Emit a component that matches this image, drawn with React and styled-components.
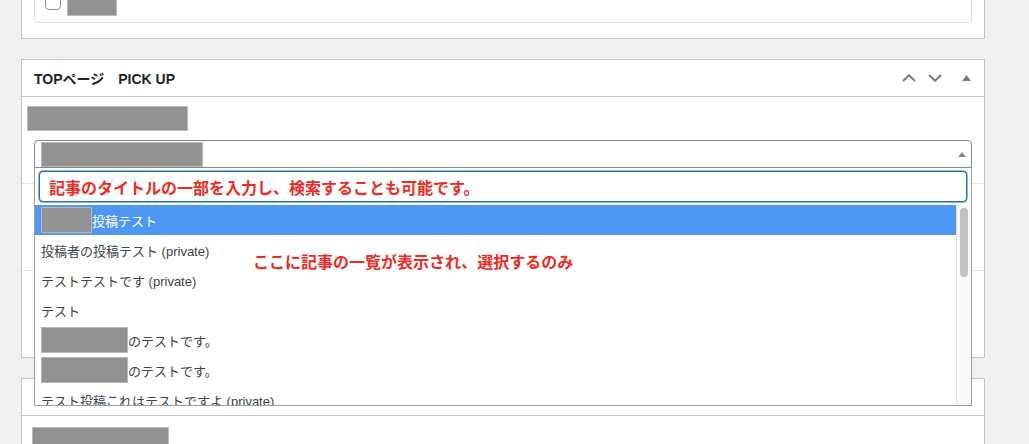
import React from 'react';
import styled, { createGlobalStyle } from 'styled-components';

const GlobalStyle = createGlobalStyle`
  * {
    box-sizing: border-box;
  }
  html,
  body {
    margin: 0;
    padding: 0;
    background: #f0f0f1;
    overflow: hidden;
  }
  body {
    font-family: "Liberation Sans", "Noto Sans CJK JP", sans-serif;
    font-size: 13px;
    color: #3c434a;
  }
`;

const Page = styled.div`
  padding-left: 21px;
  width: 985px;
`;

const Postbox = styled.section`
  position: relative;
  background: #fff;
  border: 1px solid #c3c4c7;
  margin-top: ${(p) => p.$offset}px;
`;

const PostboxInner = styled.div`
  padding: 12px 12px 15px;
`;

const InnerBox = styled.div`
  border: 1px solid #dcdcde;
  border-radius: 4px;
  padding: 6px 10px;
`;

const CheckRow = styled.div`
  display: flex;
  align-items: center;
  gap: 6px;
  height: 25px;
`;

const Checkbox = styled.span`
  width: 16px;
  height: 16px;
  border: 1px solid #8c8f94;
  border-radius: 4px;
  background: #fff;
  margin-top: -3px;
`;

// グレーの塗りつぶし（伏せ字部分）
const Redact = styled.span`
  display: inline-block;
  flex: none;
  width: ${(p) => p.$w}px;
  height: ${(p) => p.$h}px;
  background: #929292;
  border: 1px solid #b9b9b9;
`;

const Header = styled.div`
  display: flex;
  align-items: center;
  height: 37px;
  border-bottom: 1px solid #c3c4c7;
  padding-left: 12px;
`;

const Title = styled.h2`
  flex: 1;
  margin: 0;
  font-size: 14px;
  font-weight: 700;
  color: #1d2327;
`;

const HeaderButton = styled.span`
  width: ${(p) => p.$w}px;
  height: 36px;
  display: flex;
  align-items: center;
  justify-content: center;
  color: #787c82;
`;

const Field = styled.div`
  height: ${(p) => (p.$last ? 86 : 87)}px;
  padding: 9px 12px 0 5px;
  border-bottom: ${(p) => (p.$last ? 'none' : '1px solid #e4e4e6')};
`;

const FieldLabel = styled.div`
  height: 25px;
  margin-bottom: 9px;
  display: flex;
`;

const Select = styled.div`
  position: relative;
  margin-left: 7px;
  height: 28px;
  border: 1px solid #7e8993;
  border-radius: 4px 4px 0 0;
  display: flex;
  align-items: flex-end;
  padding-left: 6px;
`;

const SelectArrow = styled.span`
  position: absolute;
  right: 5px;
  top: 11px;
  width: 0;
  height: 0;
  border-style: solid;
  border-width: 0 4px 5px 4px;
  border-color: transparent transparent #888 transparent;
`;

const Dropdown = styled.div`
  position: absolute;
  z-index: 10;
  top: calc(100% + 1px);
  left: -1px;
  width: calc(100% + 2px);
  background: #fff;
  border: 1px solid #9d9d9d;
  border-top: none;
`;

const SearchWrap = styled.div`
  padding: 3px 4px;
`;

const SearchInput = styled.input`
  display: block;
  width: 100%;
  height: 31px;
  margin: 0;
  padding: 0 9px;
  border: 1px solid #2271b1;
  border-radius: 4px;
  box-shadow: 0 0 0 0.5px #2271b1;
  outline: none;
  background: #fff;
  font-family: "Liberation Sans", "Noto Sans CJK JP", sans-serif;
  font-size: 16px;
  font-weight: 700;
  color: #ee2a24;
`;

const Results = styled.div`
  position: relative;
  display: flex;
  height: 200px;
`;

const ResultList = styled.ul`
  flex: 1;
  margin: 0;
  padding: 0;
  list-style: none;
  overflow: hidden;
`;

const ResultItem = styled.li`
  display: flex;
  align-items: center;
  height: 30px;
  padding: 0 6px;
  white-space: nowrap;
  background: ${(p) => (p.$active ? '#4e98f4' : 'transparent')};
  color: ${(p) => (p.$active ? '#fff' : '#3c434a')};
`;

const ScrollTrack = styled.div`
  width: 15px;
  padding: 3px 0 0 3px;
  background: #f9f9f9;
  border-left: 1px solid #e5e5e5;
`;

const ScrollThumb = styled.div`
  width: 8px;
  height: 69px;
  border-radius: 4px;
  background: #c1c1c1;
`;

const Note = styled.div`
  position: absolute;
  left: 218px;
  top: 44px;
  font-size: 16px;
  font-weight: 700;
  color: #ee2a24;
  white-space: nowrap;
  pointer-events: none;
`;

const PanelBody = styled.div`
  height: 60px;
  padding: 11px 10px;
`;

const ChevronUp = () => (
  <svg width="14" height="8" viewBox="0 0 14 8">
    <polyline points="1,7 7,1.2 13,7" fill="none" stroke="currentColor" strokeWidth="2" />
  </svg>
);

const ChevronDown = () => (
  <svg width="14" height="8" viewBox="0 0 14 8">
    <polyline points="1,1 7,6.8 13,1" fill="none" stroke="currentColor" strokeWidth="2" />
  </svg>
);

const Caret = () => (
  <svg width="9" height="6" viewBox="0 0 9 6">
    <polygon points="0,6 4.5,0 9,6" fill="currentColor" />
  </svg>
);

const HeaderActions = () => (
  <>
    <HeaderButton $w={26}>
      <ChevronUp />
    </HeaderButton>
    <HeaderButton $w={26}>
      <ChevronDown />
    </HeaderButton>
    <HeaderButton $w={36}>
      <Caret />
    </HeaderButton>
  </>
);

const posts = [
  { mask: 51, text: '投稿テスト', active: true },
  { text: '投稿者の投稿テスト (private)' },
  { text: 'テストテストです (private)' },
  { text: 'テスト' },
  { mask: 87, text: 'のテストです。' },
  { mask: 87, text: 'のテストです。' },
  { text: 'テスト投稿これはテストですよ (private)' },
];

export default function App() {
  return (
    <Page>
      <GlobalStyle />

      <Postbox $offset={-29}>
        <PostboxInner>
          <InnerBox>
            <CheckRow>
              <Checkbox />
              <Redact $w={50} $h={25} />
            </CheckRow>
          </InnerBox>
        </PostboxInner>
      </Postbox>

      <Postbox $offset={20}>
        <Header>
          <Title>TOPページ　PICK UP</Title>
          <HeaderActions />
        </Header>

        <Field>
          <FieldLabel>
            <Redact $w={161} $h={25} />
          </FieldLabel>
          <Select>
            <Redact $w={162} $h={25} />
            <SelectArrow />
            <Dropdown>
              <SearchWrap>
                <SearchInput readOnly value="記事のタイトルの一部を入力し、検索することも可能です。" />
              </SearchWrap>
              <Results>
                <ResultList>
                  {posts.map((post, i) => (
                    <ResultItem key={i} $active={post.active}>
                      {post.mask && <Redact $w={post.mask} $h={26} />}
                      {post.text}
                    </ResultItem>
                  ))}
                </ResultList>
                <ScrollTrack>
                  <ScrollThumb />
                </ScrollTrack>
                <Note>ここに記事の一覧が表示され、選択するのみ</Note>
              </Results>
            </Dropdown>
          </Select>
        </Field>
        <Field />
        <Field $last />
      </Postbox>

      <Postbox $offset={20}>
        <Header>
          <Title />
          <HeaderActions />
        </Header>
        <PanelBody>
          <Redact $w={137} $h={30} />
        </PanelBody>
      </Postbox>
    </Page>
  );
}
